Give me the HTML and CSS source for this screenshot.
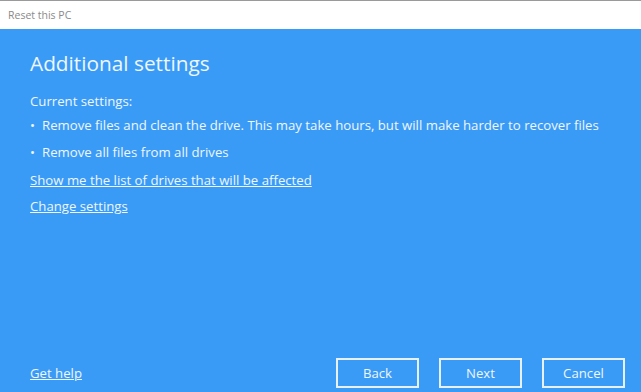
FILE: index.html
```html
<!DOCTYPE html>
<html lang="en">
<head>
    <meta charset="UTF-8">
    <title>Reset this PC</title>
    <link rel="stylesheet" href="styles.css">
</head>
<body>
    <div class="window">
        <div class="titlebar">Reset this PC</div>
        <div class="content">
            <h1>Additional settings</h1>
            <p class="label">Current settings:</p>
            <ul class="settings">
                <li>Remove files and clean the drive. This may take hours, but will make harder to recover files</li>
                <li>Remove all files from all drives</li>
            </ul>
            <a class="link" href="#">Show me the list of drives that will be affected</a>
            <a class="link" href="#">Change settings</a>
            <div class="footer">
                <a class="link help" href="#">Get help</a>
                <div class="buttons">
                    <button class="btn">Back</button>
                    <button class="btn">Next</button>
                    <button class="btn">Cancel</button>
                </div>
            </div>
        </div>
    </div>
</body>
</html>
```

FILE: styles.css
```css
body {
    margin: 0;
    padding: 0;
    font-family: 'Open Sans', 'Noto Sans', sans-serif;
    background-color: #fff;
}

.window {
    width: 641px;
    height: 392px;
    display: flex;
    flex-direction: column;
    box-sizing: border-box;
    border-top: 1px solid #9a9a9a;
}

.titlebar {
    height: 28px;
    line-height: 28px;
    padding-left: 8px;
    font-size: 10.5px;
    color: #8a8a8a;
    background-color: #fff;
}

.content {
    flex: 1;
    background-color: #3a9bf6;
    color: #eef6fe;
    padding: 19px 30px 4px 30px;
    display: flex;
    flex-direction: column;
    align-items: flex-start;
}

.content h1 {
    font-weight: 400;
    font-size: 20.8px;
    margin: 0 0 13px 0;
    line-height: 30px;
}

.label {
    margin: 0 0 4px 0;
    font-size: 13.2px;
    line-height: 20px;
}

.settings {
    list-style: none;
    margin: 0 0 8px 0;
    padding: 0;
}

.settings li {
    font-size: 13.2px;
    line-height: 20px;
    margin-bottom: 7px;
    padding-left: 12px;
    position: relative;
    white-space: nowrap;
}

.settings li:last-child {
    margin-bottom: 0;
}

.settings li::before {
    content: "\2022";
    position: absolute;
    left: 0;
}

.link {
    color: #eef6fe;
    font-size: 13.2px;
    line-height: 20px;
    margin-bottom: 6px;
}

.footer {
    margin-top: auto;
    align-self: stretch;
    display: flex;
    justify-content: space-between;
    align-items: center;
    margin-right: -14px;
}

.help {
    margin-bottom: 0;
}

.buttons {
    display: flex;
    gap: 20px;
}

.btn {
    width: 83px;
    height: 30px;
    background: transparent;
    border: 2px solid #e6f1fc;
    color: #eef6fe;
    font-family: inherit;
    font-size: 13.2px;
    cursor: pointer;
}
```
